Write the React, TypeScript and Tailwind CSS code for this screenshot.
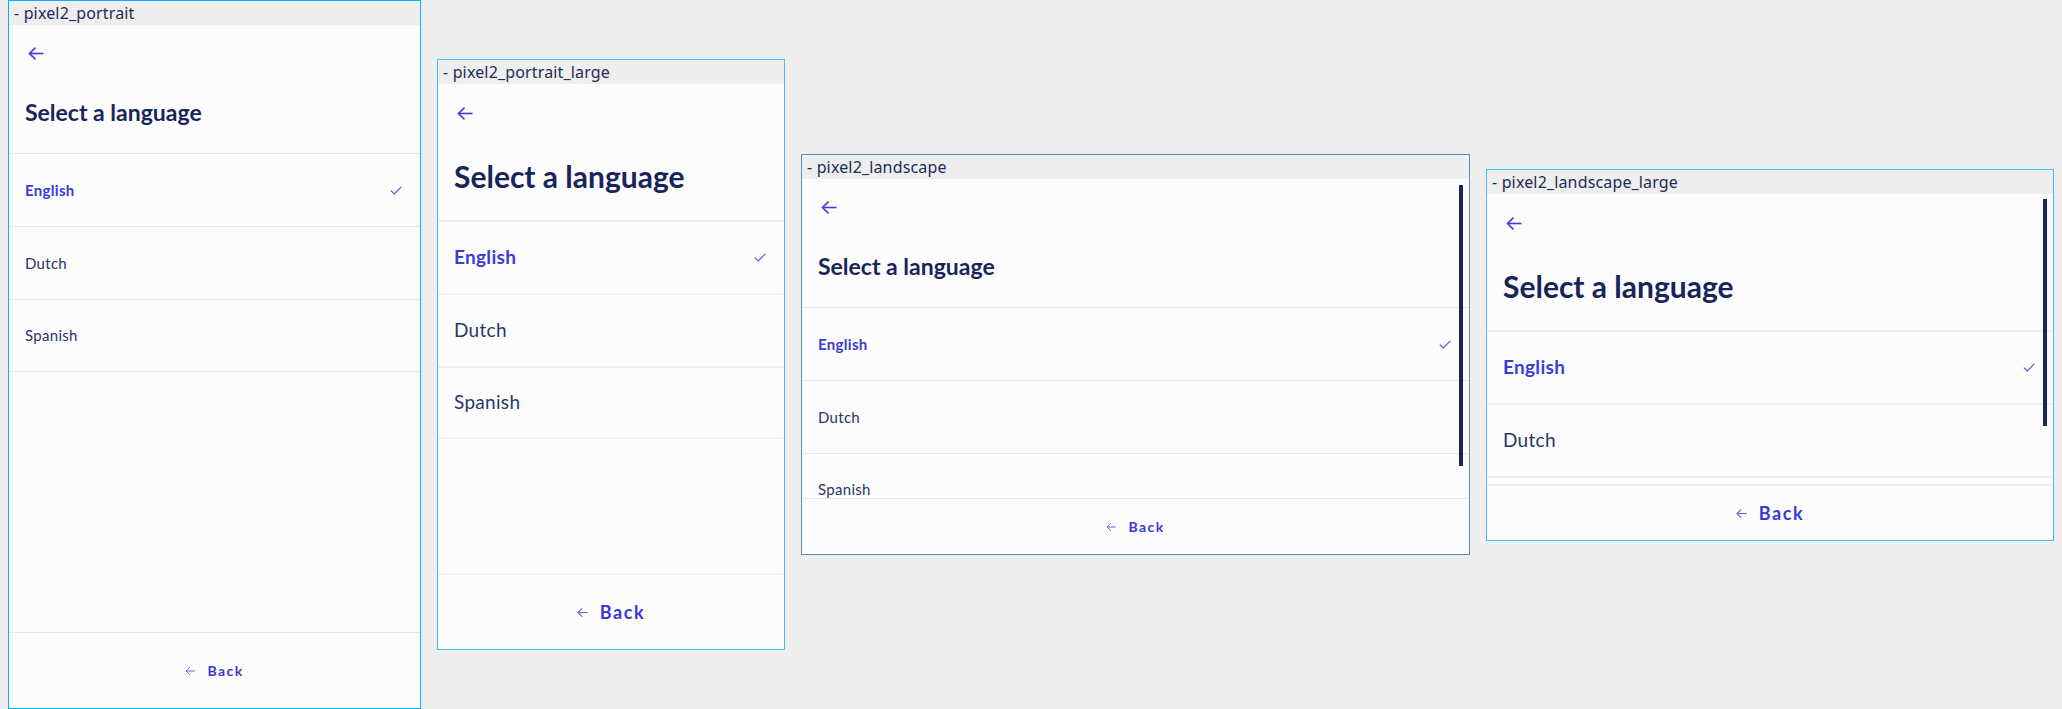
import clsx from "clsx";

type Size = "small" | "large";

const LANGUAGES = ["English", "Dutch", "Spanish"];

function ArrowIcon({ className }: { className?: string }) {
  return (
    <svg viewBox="0 0 16 13" className={className} fill="none" stroke="currentColor" strokeWidth={1.6}>
      <path d="M15.5 6.5H1.5" />
      <path d="M7.5 0.6L1.5 6.5L7.5 12.4" />
    </svg>
  );
}

function CheckIcon({ className }: { className?: string }) {
  return (
    <svg viewBox="0 0 12 9" className={className} fill="none" stroke="currentColor" strokeWidth={1.2}>
      <path d="M0.8 4.6L4.3 8L11.3 0.8" />
    </svg>
  );
}

function LanguageScreen({ size }: { size: Size }) {
  const large = size === "large";
  return (
    <div>
      {/* header */}
      <div className={clsx("flex flex-col px-4", large ? "h-[136px] pt-[23px]" : "h-[128px] pt-[22px]")}>
        <ArrowIcon className="ml-[3px] h-[13px] w-4 text-[#3d3ddb]" />
        <h1
          className={clsx(
            "font-bold text-[#17255a]",
            large ? "mt-[37px] text-[30px] leading-[38px]" : "mt-[36px] text-[23px] leading-[32px]"
          )}
        >
          Select a language
        </h1>
      </div>

      {/* language rows */}
      <ul>
        {LANGUAGES.map((lang, i) => (
          <li
            key={lang}
            className={clsx(
              "flex items-center justify-between pl-4 pr-[18px]",
              large ? "h-[73px] border-t-2 border-[#f0f0f2] text-[19px]" : "h-[73px] border-t border-[#e7e8ef] text-[15px]",
              i === LANGUAGES.length - 1 && (large ? "border-b-2" : "border-b")
            )}
          >
            <span className={i === 0 ? "font-bold tracking-[0.3px] text-[#3b3bd8]" : "tracking-[0.3px] text-[#2a3765]"}>
              {lang}
            </span>
            {i === 0 && <CheckIcon className="h-[9px] w-3 text-[#5656df]" />}
          </li>
        ))}
      </ul>
    </div>
  );
}

function DeviceFrame({
  label,
  size,
  scrolling,
  frameClass,
  footerClass,
  thumbClass,
}: {
  label: string;
  size: Size;
  scrolling?: boolean;
  frameClass: string;
  footerClass: string;
  thumbClass?: string;
}) {
  const large = size === "large";
  return (
    <div className={clsx("flex shrink-0 flex-col border bg-[#fcfcfd]", frameClass)}>
      <div className="h-6 shrink-0 bg-[#eeeeee] pl-[5px] font-['Noto_Sans',sans-serif] text-[16px] leading-6 tracking-[0.15px] text-[#1e2a58]">
        - {label}
      </div>
      <div className="relative flex min-h-0 flex-1 flex-col">
        <div className="min-h-0 flex-1 overflow-hidden">
          <LanguageScreen size={size} />
        </div>
        {scrolling && <div className={clsx("absolute right-[6px] w-1 bg-[#17265c]", thumbClass)} />}
        <div
          className={clsx(
            "flex shrink-0 items-center justify-center gap-3",
            large ? "border-t-2 border-[#f0f0f2]" : "border-t border-[#e7e8ef]",
            footerClass
          )}
        >
          <ArrowIcon className={clsx("text-[#6262e4]", large ? "h-[9px] w-[11px]" : "h-2 w-[10px]")} />
          <span
            className={clsx(
              "font-bold text-[#3838d6]",
              large ? "text-[18px] tracking-[1.6px]" : "text-[14px] tracking-[1.4px]"
            )}
          >
            Back
          </span>
        </div>
      </div>
    </div>
  );
}

export default function App() {
  return (
    <div className="flex h-[709px] items-start gap-4 overflow-hidden bg-[#eeeeee] px-2 font-['Lato',sans-serif]">
      <DeviceFrame
        label="pixel2_portrait"
        size="small"
        frameClass="h-[709px] w-[413px] border-[#0cb0f5]"
        footerClass="h-[76px]"
      />
      <DeviceFrame
        label="pixel2_portrait_large"
        size="large"
        frameClass="mt-[59px] h-[591px] w-[348px] border-[#45bdf0]"
        footerClass="h-[76px]"
      />
      <DeviceFrame
        label="pixel2_landscape"
        size="small"
        scrolling
        frameClass="mt-[154px] h-[401px] w-[669px] border-[#5a8db5]"
        footerClass="h-[56px]"
        thumbClass="top-[6px] h-[281px]"
      />
      <DeviceFrame
        label="pixel2_landscape_large"
        size="large"
        scrolling
        frameClass="mt-[169px] h-[372px] w-[568px] border-[#45bdf0]"
        footerClass="h-[56px]"
        thumbClass="top-[5px] h-[227px]"
      />
    </div>
  );
}
